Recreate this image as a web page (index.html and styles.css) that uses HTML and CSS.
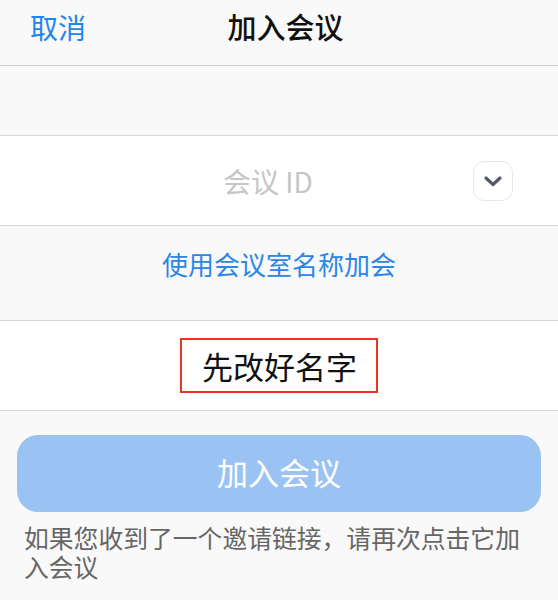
FILE: index.html
```html
<!DOCTYPE html>
<html lang="zh">
<head>
<meta charset="utf-8">
<title>加入会议</title>
<link rel="stylesheet" href="styles.css">
</head>
<body>
<header class="topbar">
  <span class="cancel">取消</span>
  <span class="title">加入会议</span>
  <span class="spacer"></span>
</header>
<div class="band band-top"></div>
<div class="field">
  <span class="placeholder">会议 ID</span>
  <span class="dropdown">
    <svg width="20" height="12" viewBox="0 0 20 12"><path d="M3 3 L10 9.5 L17 3" fill="none" stroke="#555a66" stroke-width="3.2" stroke-linecap="round" stroke-linejoin="round"/></svg>
  </span>
</div>
<div class="band band-link">
  <span class="link">使用会议室名称加会</span>
</div>
<div class="name-row">
  <span class="name-box">先改好名字</span>
</div>
<div class="bottom">
  <div class="join-btn"><span>加入会议</span></div>
  <p class="hint">如果您收到了一个邀请链接，请再次点击它加入会议</p>
</div>
</body>
</html>
```

FILE: styles.css
```css
html, body {
  margin: 0;
  padding: 0;
  background: #f9f9f9;
  font-family: "Noto Sans CJK SC", "Noto Sans", sans-serif;
}

.topbar {
  height: 66px;
  box-sizing: border-box;
  border-bottom: 1px solid #d2d2d2;
  display: grid;
  grid-template-columns: 1fr auto 1fr;
  align-items: center;
  padding: 0 0 12px 30px;
  background: #f9f9f9;
}

.cancel {
  font-size: 28px;
  color: #1f86f0;
  line-height: 1;
}

.title {
  font-size: 29px;
  color: #111;
  line-height: 1;
  font-weight: 500;
  margin-left: -17px;
}

.band {
  background: #f9f9f9;
  border-bottom: 1px solid #d6d6d6;
}

.band-top {
  height: 69px;
}

.field {
  height: 89px;
  background: #fff;
  border-bottom: 1px solid #d6d6d6;
  display: flex;
  align-items: center;
  padding-left: 223px;
}

.placeholder {
  font-size: 28px;
  color: #c6c6c6;
  line-height: 1;
}

.dropdown {
  margin-left: auto;
  margin-right: 45px;
  width: 40px;
  height: 40px;
  box-sizing: border-box;
  border: 1.5px solid #e6e6ee;
  border-radius: 11px;
  display: flex;
  align-items: center;
  justify-content: center;
}

.band-link {
  height: 95px;
  box-sizing: border-box;
  display: flex;
  align-items: center;
  justify-content: center;
  padding-bottom: 18px;
}

.link {
  font-size: 26px;
  color: #2a86e8;
  line-height: 1;
}

.name-row {
  height: 89px;
  background: #fff;
  border-bottom: 1px solid #d6d6d6;
  display: flex;
  align-items: center;
  justify-content: center;
}

.name-box {
  display: inline-block;
  border: 2px solid #ea3323;
  padding: 0 19px 0 20px;
  height: 55px;
  box-sizing: border-box;
  line-height: 51px;
  font-size: 31px;
  color: #111;
}

.bottom {
  padding: 24px 17px 0;
}

.join-btn {
  height: 77px;
  border-radius: 21px;
  background: #9ac3f4;
  display: flex;
  align-items: center;
  justify-content: center;
  padding-bottom: 4px;
  box-sizing: border-box;
}

.join-btn span {
  font-size: 31px;
  color: #fff;
  line-height: 1;
}

.hint {
  margin: 11px 0 0 7px;
  width: 505px;
  font-size: 24.8px;
  line-height: 29px;
  color: #666;
}
```
